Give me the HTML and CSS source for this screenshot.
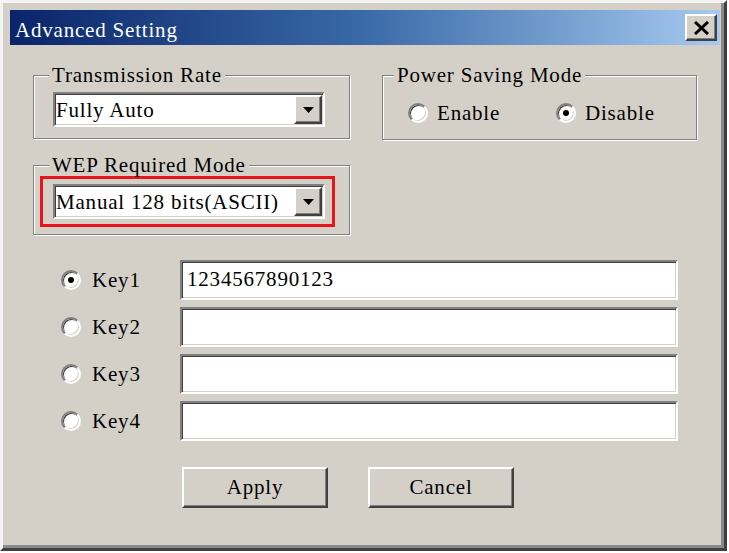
FILE: index.html
```html
<!DOCTYPE html>
<html lang="en">
<head>
<meta charset="utf-8">
<title>Advanced Setting</title>
<link rel="stylesheet" href="styles.css">
</head>
<body>
<div class="window">
  <div class="titlebar">
    <span class="title">Advanced Setting</span>
    <button class="close" type="button" aria-label="Close">
      <svg width="17" height="14" viewBox="0 0 17 14"><path d="M2 1 L15 13 M15 1 L2 13" stroke="#000" stroke-width="3" fill="none"/></svg>
    </button>
  </div>
  <div class="content">
    <div class="top-row">
      <fieldset class="group group-rate">
        <legend>Transmission Rate</legend>
        <div class="select">
          <span class="select-text">Fully Auto</span>
          <span class="drop"><svg width="11" height="6" viewBox="0 0 11 6"><polygon points="0,0 11,0 5.5,6" fill="#000"/></svg></span>
        </div>
      </fieldset>
      <fieldset class="group group-power">
        <legend>Power Saving Mode</legend>
        <div class="radio-row">
          <div class="opt"><span class="radio"></span><span>Enable</span></div>
          <div class="opt"><span class="radio checked"></span><span>Disable</span></div>
        </div>
      </fieldset>
    </div>
    <fieldset class="group group-wep">
      <legend>WEP Required Mode</legend>
      <div class="highlight">
        <div class="select">
          <span class="select-text">Manual 128 bits(ASCII)</span>
          <span class="drop"><svg width="11" height="6" viewBox="0 0 11 6"><polygon points="0,0 11,0 5.5,6" fill="#000"/></svg></span>
        </div>
      </div>
    </fieldset>
    <div class="keys">
      <span class="radio checked"></span><span class="key-label">Key1</span><div class="textbox">1234567890123</div>
      <span class="radio"></span><span class="key-label">Key2</span><div class="textbox"></div>
      <span class="radio"></span><span class="key-label">Key3</span><div class="textbox"></div>
      <span class="radio"></span><span class="key-label">Key4</span><div class="textbox"></div>
    </div>
    <div class="actions">
      <button class="btn" type="button">Apply</button>
      <button class="btn" type="button">Cancel</button>
    </div>
  </div>
</div>
</body>
</html>
```
FILE: styles.css
```css
* {
  box-sizing: border-box;
}

html,
body {
  margin: 0;
  background: #ffffff;
}

body {
  font-family: "Liberation Serif", "Times New Roman", serif;
  font-size: 21px;
  letter-spacing: 0.8px;
  color: #000;
}

.window {
  width: 727px;
  height: 551px;
  background: #d4d0c8;
  border: 3px solid;
  border-color: #f4f4f4 #404040 #404040 #f4f4f4;
  box-shadow: inset -3px -3px 0 #8a8a8a;
  padding: 7px 4px 3px 7px;
  display: flex;
  flex-direction: column;
}

.titlebar {
  height: 35px;
  flex: none;
  display: flex;
  align-items: center;
  justify-content: space-between;
  padding: 0 3px 0 5px;
  background: linear-gradient(to right, #0a246a 0%, #3a6aa8 50%, #a6caf0 100%);
  color: #fff;
}

.title {
  line-height: 24px;
  padding-top: 4px;
}

.close {
  width: 32px;
  height: 27px;
  padding: 0;
  margin: 0;
  background: #d4d0c8;
  border: 2px solid;
  border-color: #fff #404040 #404040 #fff;
  box-shadow: inset -1px -1px 0 #808080;
  display: flex;
  align-items: center;
  justify-content: center;
}

.content {
  flex: 1;
  padding: 19px 0 0 23px;
}

.top-row {
  display: flex;
  gap: 32px;
  align-items: flex-start;
}

.group {
  margin: 0;
  min-width: 0;
  border: 1px solid #808080;
  box-shadow: 1px 1px 0 #fff, inset 1px 1px 0 #fff;
}

.group legend {
  padding: 0 3px;
  line-height: 22px;
  background: #d4d0c8;
}

.group-rate {
  width: 317px;
  padding: 6px 12px 11px 15px;
}

.group-rate .select {
  margin-left: 4px;
}

.group-power {
  width: 315px;
  padding: 15px 10px 14px 11px;
}

.radio-row {
  display: grid;
  grid-template-columns: 148px auto;
  padding-left: 14px;
}

.opt {
  display: flex;
  align-items: center;
  gap: 9px;
  line-height: 24px;
}

.radio {
  width: 20px;
  height: 20px;
  border-radius: 50%;
  border: 2px solid;
  border-color: #808080 #fff #fff #808080;
  box-shadow: inset 1px 1px 0 #404040, inset -1px -1px 0 #d4d0c8;
  background: #fff;
  display: flex;
  align-items: center;
  justify-content: center;
}

.radio.checked::after {
  content: "";
  width: 6px;
  height: 6px;
  border-radius: 50%;
  background: #000;
}

.group-wep {
  width: 317px;
  margin-top: 14px;
  padding: 0 14px 7px 6px;
}

.group-wep legend {
  margin-left: 9px;
}

.highlight {
  border: 3px solid #e8141c;
  padding: 5px 7px 5px 10px;
}

.select {
  width: 272px;
  height: 35px;
  display: flex;
  background: #fff;
  border: 2px solid;
  border-color: #808080 #fff #fff #808080;
  box-shadow: inset 1px 1px 0 #404040, inset -1px -1px 0 #d4d0c8;
}

.select-text {
  flex: 1;
  align-self: center;
  line-height: 24px;
  padding-left: 1px;
  white-space: nowrap;
}

.drop {
  width: 28px;
  margin: 1px;
  background: #d4d0c8;
  border: 2px solid;
  border-color: #fff #404040 #404040 #fff;
  box-shadow: inset -1px -1px 0 #808080;
  display: flex;
  align-items: center;
  justify-content: center;
}

.keys {
  margin-top: 25px;
  padding-left: 28px;
  display: grid;
  grid-template-columns: 31px 88px 498px;
  grid-auto-rows: 40px;
  row-gap: 7px;
  align-items: center;
}

.key-label {
  line-height: 24px;
}

.textbox {
  height: 40px;
  background: #fff;
  border: 2px solid;
  border-color: #808080 #fff #fff #808080;
  box-shadow: inset 1px 1px 0 #404040, inset -1px -1px 0 #d4d0c8;
  padding: 0 6px 3px 5px;
  line-height: 24px;
  display: flex;
  align-items: center;
}

.actions {
  margin-top: 26px;
  padding-left: 149px;
  display: flex;
  gap: 40px;
}

.btn {
  width: 146px;
  height: 41px;
  margin: 0;
  padding: 0;
  font: inherit;
  letter-spacing: inherit;
  color: #000;
  background: #d4d0c8;
  border: 2px solid;
  border-color: #fff #404040 #404040 #fff;
  box-shadow: inset -1px -1px 0 #808080;
}
```
